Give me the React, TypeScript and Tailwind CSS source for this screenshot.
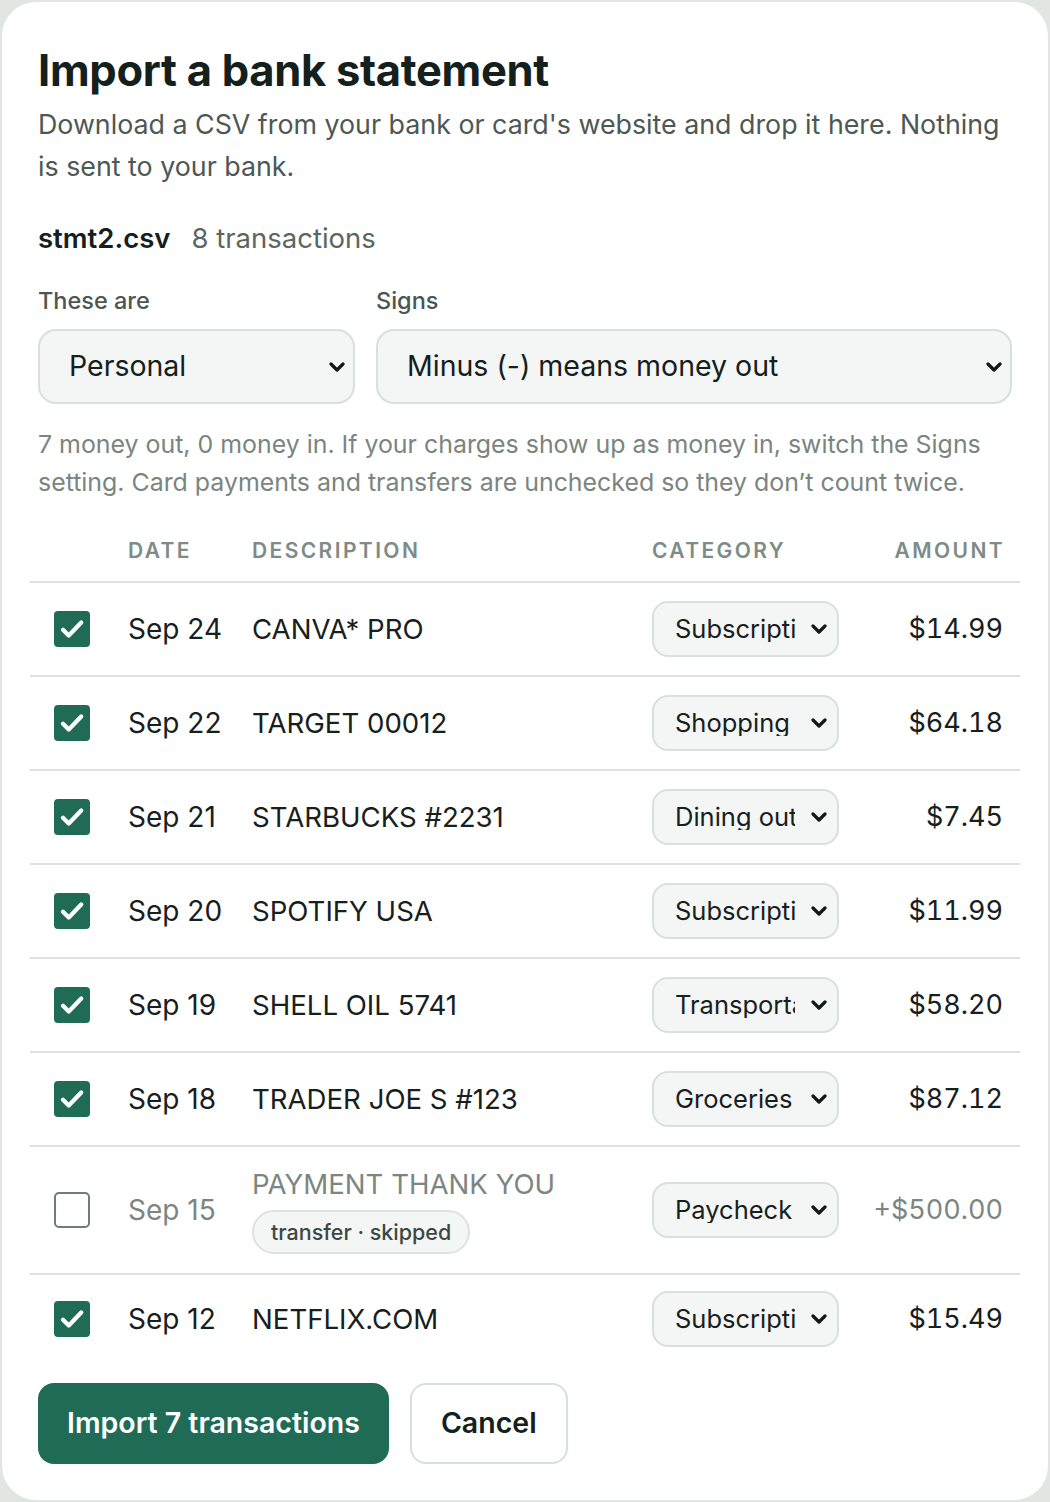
import React from "react";

type Row = {
  date: string;
  desc: string;
  category: string;
  amount: string;
  checked: boolean;
  tag?: string;
};

const rows: Row[] = [
  { date: "Sep 24", desc: "CANVA* PRO", category: "Subscriptions", amount: "$14.99", checked: true },
  { date: "Sep 22", desc: "TARGET 00012", category: "Shopping", amount: "$64.18", checked: true },
  { date: "Sep 21", desc: "STARBUCKS #2231", category: "Dining out", amount: "$7.45", checked: true },
  { date: "Sep 20", desc: "SPOTIFY USA", category: "Subscriptions", amount: "$11.99", checked: true },
  { date: "Sep 19", desc: "SHELL OIL 5741", category: "Transportation", amount: "$58.20", checked: true },
  { date: "Sep 18", desc: "TRADER JOE S #123", category: "Groceries", amount: "$87.12", checked: true },
  {
    date: "Sep 15",
    desc: "PAYMENT THANK YOU",
    category: "Paycheck",
    amount: "+$500.00",
    checked: false,
    tag: "transfer · skipped",
  },
  { date: "Sep 12", desc: "NETFLIX.COM", category: "Subscriptions", amount: "$15.49", checked: true },
];

function Chevron({ className }: { className?: string }) {
  return (
    <svg viewBox="0 0 16 10" className={className} fill="none">
      <path d="M2 2l6 6 6-6" stroke="#111816" strokeWidth="3.2" strokeLinecap="round" strokeLinejoin="round" />
    </svg>
  );
}

function Checkbox({ checked }: { checked: boolean }) {
  if (!checked) {
    return <div className="w-[36px] h-[36px] rounded-[5px] border-2 border-[#737b77] bg-white" />;
  }
  return (
    <div className="w-[36px] h-[36px] rounded-[4px] bg-[#1f6b56] flex items-center justify-center">
      <svg viewBox="0 0 24 24" className="w-[30px] h-[30px]" fill="none">
        <path d="M4.8 12.6l4.6 4.6L19.4 6.8" stroke="#ffffff" strokeWidth="3.4" strokeLinecap="round" strokeLinejoin="round" />
      </svg>
    </div>
  );
}

function CategorySelect({ value }: { value: string }) {
  return (
    <div className="w-[187px] h-[56px] rounded-[16px] border-2 border-[#d9dfdc] bg-[#f4f6f5] flex items-center pl-[21px] pr-[9px]">
      <span className="w-[120px] overflow-hidden whitespace-nowrap text-[25.5px] leading-none text-[#17201c]">
        {value}
      </span>
      <Chevron className="w-[16px] h-[10px] ml-auto mr-[1px]" />
    </div>
  );
}

export default function App() {
  return (
    <div
      className="min-h-[1502px] w-[1050px] bg-[#e1e6e3] p-[2px]"
      style={{ fontFamily: "Inter, 'Noto Sans', sans-serif" }}
    >
      <div className="rounded-[34px] bg-white pt-[44px] pb-[36px] px-[36px] h-[1498px] w-[1046px]">
        <h1 className="text-[43.5px] leading-[48px] font-bold text-[#14201b] tracking-[-0.3px]">
          Import a bank statement
        </h1>
        <p className="mt-[9px] text-[26.8px] leading-[42px] text-[#4d5853]">
          Download a CSV from your bank or card's website and drop it here. Nothing is sent to your bank.
        </p>

        <div className="mt-[31px] flex items-baseline gap-[21px] text-[27.5px] leading-[40px]">
          <span className="font-semibold text-[#14201b]">stmt2.csv</span>
          <span className="text-[#5b6661]">8 transactions</span>
        </div>

        <div className="mt-[27px] flex gap-[21px]">
          <div className="w-[317px] flex flex-col">
            <span className="text-[23.5px] leading-[32px] font-medium text-[#4b5752]">These are</span>
            <div className="mt-[12px] h-[75px] rounded-[18px] border-2 border-[#d9dfdc] bg-[#f4f6f5] flex items-center pl-[29px] pr-[8px]">
              <span className="text-[28.5px] text-[#14201b]">Personal</span>
              <Chevron className="w-[16px] h-[10px] ml-auto" />
            </div>
          </div>
          <div className="flex-1 flex flex-col">
            <span className="text-[23.5px] leading-[32px] font-medium text-[#4b5752]">Signs</span>
            <div className="mt-[12px] h-[75px] rounded-[18px] border-2 border-[#d9dfdc] bg-[#f4f6f5] flex items-center pl-[29px] pr-[8px]">
              <span className="text-[28.5px] text-[#14201b]">Minus (-) means money out</span>
              <Chevron className="w-[16px] h-[10px] ml-auto" />
            </div>
          </div>
        </div>

        <p className="mt-[21px] text-[24.9px] leading-[38px] text-[#7a8580]">
          7 money out, 0 money in. If your charges show up as money in, switch the Signs setting. Card payments and transfers are unchecked so they don’t count twice.
        </p>

        <div className="mt-[35px] -mx-[8px]">
          <div className="grid grid-cols-[98px_124px_400px_1fr_auto] pr-[17px] pb-[15px] border-b-2 border-[#dde2df] text-[21px] leading-[30px] font-semibold tracking-[2.4px] text-[#7d8c86]">
            <span />
            <span>DATE</span>
            <span>DESCRIPTION</span>
            <span>CATEGORY</span>
            <span className="text-right mr-[-2px]">AMOUNT</span>
          </div>

          {rows.map((r, i) => {
            const muted = !r.checked;
            const last = i === rows.length - 1;
            const textColor = muted ? "text-[#7b8681]" : "text-[#17201c]";
            return (
              <div
                key={i}
                className={`grid grid-cols-[98px_124px_400px_1fr_auto] items-center pr-[17px] ${
                  r.tag ? "h-[128px]" : last ? "h-[88px]" : "h-[94px]"
                } ${last ? "" : "border-b-2 border-[#dde2df]"}`}
              >
                <div className="pl-[24px]">
                  <Checkbox checked={r.checked} />
                </div>
                <span className={`text-[28px] ${textColor}`}>{r.date}</span>
                <div className="flex flex-col items-start">
                  <span className={`text-[27.6px] leading-[36px] ${textColor}`}>{r.desc}</span>
                  {r.tag && (
                    <span className="mt-[8px] rounded-full border-2 border-[#dde2df] bg-[#f4f6f5] px-[17px] h-[44px] flex items-center text-[21.5px] font-medium text-[#3d4843]">
                      {r.tag}
                    </span>
                  )}
                </div>
                <div>
                  <CategorySelect value={r.category} />
                </div>
                <span className={`text-right text-[27px] tabular-nums ${textColor}`}>{r.amount}</span>
              </div>
            );
          })}
        </div>

        <div className="mt-[20px] flex gap-[21px]">
          <button className="h-[81px] px-[29px] rounded-[16px] bg-[#1f6b56] text-white text-[28.5px] font-semibold">
            Import 7 transactions
          </button>
          <button className="h-[81px] px-[29px] rounded-[16px] border-2 border-[#d9dfdc] bg-white text-[#14201b] text-[28.5px] font-semibold">
            Cancel
          </button>
        </div>
      </div>
    </div>
  );
}
